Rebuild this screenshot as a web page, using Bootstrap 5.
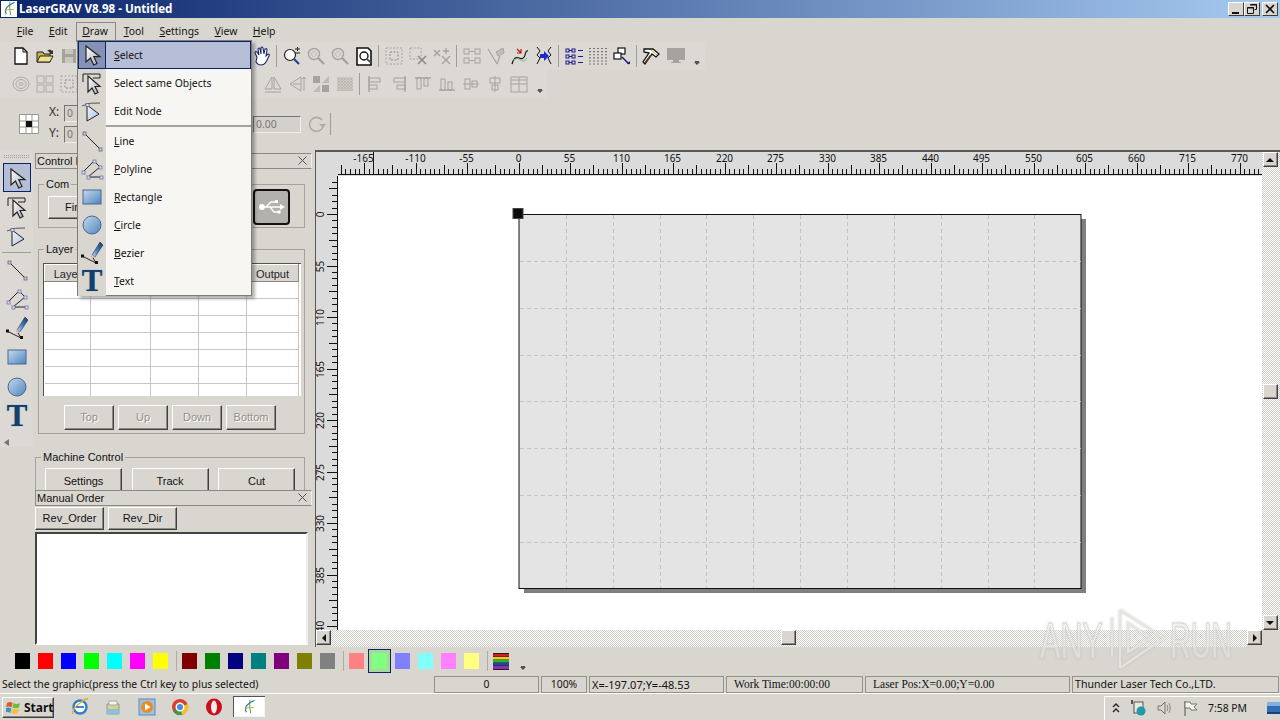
<!DOCTYPE html>
<html lang="en">

<head>
  <meta charset="UTF-8">
  <title>LaserGRAV V8.98 - Untitled</title>
  <link href="https://cdn.jsdelivr.net/npm/bootstrap@5.3.0/dist/css/bootstrap.min.css" rel="stylesheet">
  <style>
    html, body { margin: 0; height: 720px; overflow: hidden; }
    body {
      width: 1280px;
      background: #d9d6d0;
      color: #111;
      font: 10.4px/13px "Noto Sans", "Liberation Sans", sans-serif;
    }
    u { text-underline-offset: 1px; }

    /* title bar */
    .title-bar {
      height: 18px;
      background: linear-gradient(90deg, #0a246a 0, #a6caf0 100%);
      color: #fff;
      font: bold 11.6px/18px "Noto Sans", "Liberation Sans", sans-serif;
    }
    .app-icon { margin: 0 2px 0 1px; }
    .cap-group { margin-right: 2px; }
    .cap-btn {
      width: 16px; height: 14px; padding: 0;
      background: #d9d6d0;
      border: 1px solid; border-color: #fff #404040 #404040 #fff;
    }
    .cap-btn.cap-close { margin-left: 2px; }

    /* menu bar */
    .menu-bar { height: 24px; padding: 4px 0 0 9px; }
    .menu-top { padding: 3px 7.75px 0; height: 20px; }
    .menu-top.opened { box-shadow: inset 1px 1px #8d8a85, inset -1px 0 #8d8a85; margin-left: 1px; padding-left: 6px; padding-right: 8px; }

    /* toolbars */
    .tool-row { height: 28px; padding-left: 9px; }
    .tool-row.first { width: 705px; background: #dcd9d4; }
    .tool-row.second { width: 547px; background: #dcd9d4; }
    .under-menu-1 { width: 169px; flex: none; }
    .under-menu-2 { width: 180px; flex: none; }
    .tb-btn { width: 24px; height: 24px; flex: none; }
    .tb-btn svg { width: 20px; height: 20px; }
    .tb-sep { width: 6px; height: 22px; flex: none; }
    .tb-sep::after { content: ""; display: block; width: 1px; height: 22px; margin-left: 2px; background: #a09d97; }
    .tb-more { margin: 14px 0 0 6px; border: 3px solid transparent; border-top-color: #55534f; border-bottom: 0; width: 0; height: 0; box-shadow: 0 -2px 0 -1px #55534f; flex: none; }
    .colour-bar .tb-more { margin-left: 11px; }

    .prop-row { height: 52px; padding-left: 19px; }
    .prop-label { width: 17px; padding-left: 2px; font-size: 12px; color: #333; }
    .prop-input {
      background: #d4d1cb; color: #777;
      border: 1px solid; border-color: #77746f #eee #eee #77746f;
      height: 17px; line-height: 15px; padding-left: 2px; width: 40px;
    }
    .prop-input.angle { width: 48px; }
    .under-menu-3 { width: 149px; flex: none; }
    .rotate-icon { margin-left: 5px; }
    .prop-sep { width: 1px; height: 22px; background: #a09d97; margin-left: 4px; }

    /* left vertical toolbar */
    .left-tools { width: 33px; height: 297px; background: #dcd9d4; flex: none; }
    .grip { height: 3px; margin: 5px 4px 5px; border-top: 1px dotted #a09d97; border-bottom: 1px dotted #a09d97; }
    .lt-btn { width: 28px; height: 29.3px; margin-left: 3px; }
    .lt-btn svg { width: 24px; height: 24px; }
    .lt-btn.on { background: #b5bed6; box-shadow: inset 0 0 0 1px #0a246a; }
    .lt-sep { height: 3px; margin: 1px 2px 0; border-top: 1px solid #a09d97; }
    .big-t { font: bold 31px/28px "Liberation Serif", serif; color: #123f6b; text-shadow: 0 0 1px #5b7fa5; }

    /* dock panels */
    .dock { width: 277px; margin: 0 3px 0 2px; flex: none; font: 11px/13px "Liberation Sans", sans-serif; }
    .ctl-panel { height: 340px; padding-top: 3px; overflow: hidden; }
    .dock-title {
      height: 16px; padding: 0 1px; line-height: 14px;
      border: 1px solid #8d8a85; border-right-color: #eee;
    }
    .dock-x { width: 9px; height: 9px; margin: 2px 3px 0 0; flex: none; }
    fieldset.grp { border: 1px solid #a5a29c; display: block; }
    fieldset.grp legend {
      float: none; width: auto; font-size: 11px; line-height: 14px; margin: 0 0 0 5px; padding: 0 2px;
    }
    .grp-com { margin: 8px 0 0 3px; width: 267px; height: 51px; }
    .grp-layer { margin: 14px 0 0 3px; width: 267px; height: 192px; }
    .grp-machine { margin: 16px 0 0; width: 270px; height: 70px; }
    .com-row { margin-top: -2px; padding-left: 9px; }
    .btn.win-btn {
      --bs-btn-padding-y: 0;
      --bs-btn-padding-x: 0;
      --bs-btn-font-size: 11px;
      --bs-btn-line-height: 1;
      --bs-btn-border-radius: 0;
      --bs-btn-disabled-opacity: 1;
      background: #d9d6d0; color: #111;
      border: 1px solid; border-color: #fff #404040 #404040 #fff;
      box-shadow: inset -1px -1px #8d8a85;
      font-family: "Liberation Sans", sans-serif;
    }
    .btn.win-btn:disabled { color: #928f89; text-shadow: 1px 1px #fff; }
    .btn.win-btn.find-btn { width: 80px; height: 23px; text-align: left; padding-left: 16px; }
    .btn.win-btn.move-btn { width: 50px; height: 25px; }
    .btn.win-btn.mach-btn { width: 77px; height: 30px; padding-bottom: 4px; }
    .btn.win-btn.order-btn { width: 69px; height: 23px; }
    .move-row { margin: 9px 0 0 25px; }
    .mach-row { margin: 4px 9px 0; }
    .order-row { padding: 1px 0 2px; }
    .usb-box { width: 37px; height: 36px; background: #b3b1ad; border: 2px solid #111; border-radius: 4px; margin-right: 14px; }
    .grid-box {
      width: 258px; height: 133px; margin: 7px 0 0 4px; overflow: hidden; background: #fff;
      border-left: 1px solid #55534f; border-top: 1px solid #55534f;
    }
    .table.layer-grid {
      --bs-table-bg: transparent;
      table-layout: fixed; width: 254px; margin: 0; border-color: #c8c6c2;
    }
    .layer-grid td, .layer-grid th { padding: 0; height: 17px; border: 0; border-right: 1px solid #c8c6c2; border-bottom: 1px solid #c8c6c2; }
    .layer-grid th {
      background: #d9d6d0; font-weight: 400; font-size: 11px; text-align: center;
      border-color: #8d8a85; border-top: 1px solid #fff; border-left: 1px solid #fff;
    }
    .col-a { width: 46px; }
    .col-b { width: 60px; }
    .col-c { width: 48px; }
    .col-d { width: 52px; }
    .list-box { height: 113px; width: 273px; background: #fff; border: 2px solid; border-color: #444 #eee #fff #444; }

    /* canvas view */
    .view { flex: 1; border-top: 2px solid #5a5855; border-left: 1px solid #5a5855; height: 497px; display: grid; grid-template-columns: 22px 924px 18px; grid-template-rows: 24px 454px 17px; }
    .view svg { display: block; overflow: visible; }
    .ruler-bg { background: #dbdbdb; }
    .page-bg { background: #fff; }
    .checker { background: repeating-conic-gradient(#d0cec9 0 25%, #fff 0 50%) 0 0 / 2px 2px; }
    .sb-v { padding-right: 2px; }
    .sb-btn {
      width: 15px; height: 15px; background: #d9d6d0;
      border: 1px solid; border-color: #fff #404040 #404040 #fff; box-shadow: inset -1px -1px #8d8a85;
      flex: none;
    }
    .sb-arrow { width: 0; height: 0; border: 4px solid transparent; }
    .arrow-up { border-bottom-color: #111; border-top: 0; }
    .arrow-down { border-top-color: #111; border-bottom: 0; margin-top: 1px; }
    .arrow-left { border-right-color: #111; border-left: 0; }
    .arrow-right { border-left-color: #111; border-right: 0; }
    .thumb-gap-v { height: 208px; flex: none; }
    .thumb-gap-h { width: 450px; flex: none; }
    .sb-h { grid-column: 1 / span 2; }
    .ruler-text { font: 10px "Noto Sans", "Liberation Sans", sans-serif; fill: #111; }

    /* bottom bars */
    .colour-bar { height: 28px; padding-left: 15px; }
    .swatch { width: 15px; height: 16px; margin-right: 8px; flex: none; }
    .swatch.picked { box-shadow: 0 0 0 3px #a8d8a0, 0 0 0 4px #0a246a; }
    .col-sep { width: 6px; height: 20px; flex: none; }
    .col-sep::after { content: ""; display: block; width: 1px; height: 20px; background: #b0ada7; }

    .status-bar { height: 18px; }
    .stat-msg { width: 434px; padding-left: 2px; }
    .stat-cell { height: 17px; line-height: 15px; border: 1px solid #94918b; margin-right: 2px; flex: none; white-space: nowrap; overflow: hidden; }
    .serif-cell { font: 11.5px/15px "Liberation Serif", serif; padding-left: 7px; }
    .cell-count { width: 105px; text-align: center; }
    .cell-zoom { width: 46px; text-align: center; }
    .cell-pos { width: 135px; padding-left: 2px; font-size: 11px; }
    .cell-work { width: 137px; }
    .cell-laser { width: 205px; }
    .cell-firm { flex: 1 1 0; padding-left: 2px; margin-right: 1px; font-size: 10.6px; }

    .task-bar { height: 27px; border-top: 1px solid #fff; }
    .start-btn {
      width: 52px; height: 21px; margin: 3px 0 0 2px; padding-left: 3px; gap: 3px;
      background: #d9d6d0; border: 1px solid; border-color: #fff #404040 #404040 #fff;
      box-shadow: inset -1px -1px #8d8a85;
      font: bold 12px/19px "Noto Sans", "Liberation Sans", sans-serif;
    }
    .quick-group { margin-left: 9px; }
    .quick { width: 33.5px; }
    .quick svg { width: 18px; height: 18px; display: block; margin: 4px auto 0; }
    .task-item { width: 32px; height: 21px; margin: 2px 0 0 2px; background: #fff; box-shadow: inset 1px 1px #55534f, inset -1px -1px #f4f4f4; }
    .tray { width: 176px; height: 24px; margin-top: 2px; box-shadow: inset 1px 1px #fff; padding-left: 8px; }
    .tray-net { margin-left: 10px; }
    .tray-vol { margin-left: 8px; }
    .tray-flag { margin-left: 10px; }
    .tray-clock { width: 50px; margin-left: 10px; white-space: nowrap; }
    .tray-desk { margin-left: 8px; }

    .watermark { position: absolute; left: 1030px; top: 605px; width: 250px; height: 70px; pointer-events: none; filter: drop-shadow(0 0 1px rgba(160, 160, 160, .5)); }
    .watermark text {
      font: 50px "Liberation Sans", sans-serif;
      fill: rgba(255, 255, 255, .4);
      stroke: rgba(212, 212, 208, .9);
      stroke-width: 1;
    }
    .watermark path { fill: none; stroke: rgba(230, 230, 226, .9); stroke-width: 2.500; }

    /* open Draw menu */
    .dropdown-menu.draw-menu {
      position: absolute; left: 77px; top: 40px; width: 175px; height: 256px;
      padding: 0; margin: 0; border-radius: 0;
      border: 1px solid #7e7b76; background: #f8f6f3;
      box-shadow: 3px 3px 3px rgba(0, 0, 0, .3);
      font-size: 10.4px;
    }
    .draw-menu .dropdown-item {
      display: flex; align-items: center; height: 28px; padding: 0; color: #111;
      background: transparent;
    }
    .draw-menu .gutter { width: 28px; height: 100%; flex: none; background: #d9d6d0; display: flex; align-items: center; justify-content: center; }
    .draw-menu .gutter svg { width: 24px; height: 24px; }
    .draw-menu .item-text { padding-left: 8px; }
    .draw-menu .dropdown-item.active { background: #b5bed6; box-shadow: inset 0 0 0 1px #0a246a; }
    .draw-menu .active .gutter { background: #8592b5; box-shadow: inset 0 0 0 1px #0a246a; }
    .menu-line { height: 2px; background: linear-gradient(90deg, #d9d6d0 28px, #a5a29c 28px); }
    .menu-tail { height: 1px; background: linear-gradient(90deg, #d9d6d0 28px, transparent 28px); }
  </style>
</head>

<body class="position-relative">
  <!-- shared icons -->
  <svg width="0" height="0" class="position-absolute">
    <defs>
      <linearGradient id="blue-fill" x1="0" y1="0" x2="1" y2="1">
        <stop offset="0" stop-color="#c5d9ee" />
        <stop offset="1" stop-color="#4f86c0" />
      </linearGradient>
      <linearGradient id="arrow-fill" x1="0" y1="0" x2="1" y2="1">
        <stop offset="0" stop-color="#fff" />
        <stop offset="1" stop-color="#a9adb8" />
      </linearGradient>
      <linearGradient id="node-fill" x1="0" y1="0" x2="1" y2="1">
        <stop offset="0" stop-color="#f2f6fb" />
        <stop offset="1" stop-color="#a9c4e2" />
      </linearGradient>
      <linearGradient id="pen-fill" x1="0" y1="1" x2="1" y2="0">
        <stop offset="0" stop-color="#c7d9ee" />
        <stop offset=".5" stop-color="#3f77b8" />
        <stop offset="1" stop-color="#16365f" />
      </linearGradient>
    </defs>
    <symbol id="ic-arrow" viewBox="0 0 24 24"><path d="M6 3v16l4.500-4 3.200 7 3.300-1.500-3.200-6.800H20z" fill="url(#arrow-fill)" stroke="#222" stroke-width="1.200" /></symbol>
    <symbol id="ic-same" viewBox="0 0 24 24"><path d="M3 3h17v4h-7M3 3v8" fill="none" stroke="#222" /><path d="M8 5v16l4-4 3 6 3-1.500-3-6h5z" fill="url(#arrow-fill)" stroke="#222" stroke-width="1.200" /></symbol>
    <symbol id="ic-node" viewBox="0 0 24 24"><path d="M2 7q8-4 18-3" fill="none" stroke="#555" /><path d="M7 6v16l12-7z" fill="url(#node-fill)" stroke="#222" /><rect x="6" y="4.500" width="3" height="3" fill="#dde" stroke="#446" stroke-width=".6" /></symbol>
    <symbol id="ic-line" viewBox="0 0 24 24"><path d="M5 5l15 15" stroke="#222" /><rect x="3" y="3" width="3" height="3" fill="#ccd" stroke="#557" stroke-width=".7" /><rect x="19" y="19" width="3" height="3" fill="#ccd" stroke="#557" stroke-width=".7" /></symbol>
    <symbol id="ic-poly" viewBox="0 0 24 24"><path d="M3 15 14 4l6 6-12 10h13" fill="none" stroke="#222" /><path d="M3 15l5 5" stroke="#9aa" stroke-dasharray="1 1" /><g fill="#dde" stroke="#66a" stroke-width=".7"><rect x="2" y="14" width="3" height="3" /><rect x="13" y="3" width="3" height="3" /><rect x="19" y="9" width="3" height="3" /><rect x="7" y="19" width="3" height="3" /><rect x="20" y="19" width="3" height="3" /></g></symbol>
    <symbol id="ic-rect" viewBox="0 0 24 24"><rect x="3" y="5" width="18" height="14" fill="url(#blue-fill)" stroke="#44688f" /></symbol>
    <symbol id="ic-circle" viewBox="0 0 24 24"><circle cx="12" cy="12" r="9" fill="url(#blue-fill)" stroke="#44688f" /></symbol>
    <symbol id="ic-bezier" viewBox="0 0 24 24"><path d="M2 15l14 7M16 22 12 15" fill="none" stroke="#222" /><rect x="1" y="13.500" width="3" height="3" fill="#111" /><rect x="15" y="20" width="3" height="3" fill="#111" /><path d="M12 14 20 1l3 3-8 12z" fill="url(#pen-fill)" stroke="#123" stroke-width=".5" /><path d="M12 14l3 2-4 2z" fill="#e9b9a8" /></symbol>

    <symbol id="ic-new" viewBox="0 0 20 20"><path d="M4 2h8l4 4v12H4z" fill="#fff" stroke="#111" stroke-width="1.300" /><path d="M12 2v4h4" fill="none" stroke="#111" /></symbol>
    <symbol id="ic-open" viewBox="0 0 20 20"><path d="M2 6h6l1 2h6v8H2z" fill="#c9b04a" stroke="#222" /><path d="M2 16l3-6h13l-3 6z" fill="#efe090" stroke="#222" /><path d="M12 5q3-3 5 0l1-1v4h-4l1-1q-1-2-3-2z" fill="#333" /></symbol>
    <symbol id="ic-save" viewBox="0 0 20 20"><path d="M3 3h14v14H3z" fill="#a6a39d" /><rect x="6" y="3" width="8" height="5" fill="#c9c6c0" /><rect x="6" y="11" width="8" height="6" fill="#c9c6c0" /></symbol>
    <symbol id="ic-hand" viewBox="0 0 20 20"><path d="M5 11 3 7q0-2 2-1l2 3-1-6q1-2 2 0l1 5V2q1-2 2 0l1 6 1-5q2-1 2 1l-1 6 2-2q2 0 1 2l-3 6q-2 3-5 3-3 0-5-3z" fill="#fff" stroke="#1a2a6b" stroke-width="1.100" /></symbol>
    <symbol id="ic-zplus" viewBox="0 0 20 20"><circle cx="8" cy="9" r="5.500" fill="#fff" stroke="#222" stroke-width="1.200" /><path d="M12 13l5 5" stroke="#223a8a" stroke-width="2" /><path d="M13 3h5M15.500 1v4M13 7h5" stroke="#222" /></symbol>
    <symbol id="ic-zgray" viewBox="0 0 20 20"><circle cx="8" cy="8" r="5.500" fill="none" stroke="#a6a39d" stroke-width="1.400" /><circle cx="8" cy="8" r="2.500" fill="none" stroke="#c2bfb9" /><path d="M12 12l6 6" stroke="#a6a39d" stroke-width="2.400" /></symbol>
    <symbol id="ic-zpage" viewBox="0 0 20 20"><path d="M3 2h11l3 3v14H3z" fill="#fff" stroke="#111" stroke-width="1.600" /><circle cx="10" cy="10" r="4" fill="#fff" stroke="#111" stroke-width="1.400" /><path d="M13 13l3 3" stroke="#555" stroke-width="2" /></symbol>
    <symbol id="ic-g1" viewBox="0 0 20 20"><g fill="none" stroke="#a6a39d" stroke-dasharray="2 1.500"><rect x="2" y="2" width="16" height="16" /><rect x="6" y="6" width="8" height="8" stroke="#8d8a85" /></g></symbol>
    <symbol id="ic-g2" viewBox="0 0 20 20"><rect x="2" y="2" width="11" height="11" fill="none" stroke="#a6a39d" stroke-dasharray="2 1.500" /><path d="M10 10l8 8M18 10l-8 8" stroke="#8d8a85" stroke-width="1.600" /></symbol>
    <symbol id="ic-g3" viewBox="0 0 20 20"><path d="M2 4l6 6M8 4l-6 6M10 10l8 8M18 10l-8 8M14 2v6M11 5h6" stroke="#a6a39d" stroke-width="1.400" /></symbol>
    <symbol id="ic-g4" viewBox="0 0 20 20"><g fill="none" stroke="#a6a39d"><rect x="2" y="3" width="5" height="5" /><rect x="13" y="3" width="5" height="5" /><rect x="2" y="12" width="5" height="5" /><rect x="13" y="12" width="5" height="5" /><path d="M8 5.500h4M8 14.500h4" /></g></symbol>
    <symbol id="ic-g5" viewBox="0 0 20 20"><path d="M2 3l9 15M11 18l3-8" fill="none" stroke="#a6a39d" stroke-width="1.200" /><path d="M10 6l7-4 1 5-6 3z" fill="#c2bfb9" stroke="#a6a39d" /></symbol>
    <symbol id="ic-curve" viewBox="0 0 20 20"><path d="M2 18q2-8 7-6t6-3 3-4" fill="none" stroke="#111" stroke-width="1.200" /><path d="M3 14q5-3 8 0t6-2" fill="none" stroke="#7ec07e" /><path d="M7 3l4 4M11 3v4H7" stroke="#c01818" stroke-width="1.200" fill="none" /></symbol>
    <symbol id="ic-break" viewBox="0 0 20 20"><path d="M3 1l3 4-3 4 3 3-3 6M17 1l-3 4 3 4-3 3 3 6" fill="none" stroke="#111" /><path d="M6 8h4V5l5 5-5 5v-3H6z" fill="#1a2ad0" /></symbol>
    <symbol id="ic-list" viewBox="0 0 20 20"><g fill="none" stroke="#1a1a8a"><rect x="2" y="3" width="3" height="3" /><rect x="8" y="3" width="3" height="3" /><rect x="2" y="9" width="3" height="3" /><rect x="8" y="9" width="3" height="3" /><rect x="2" y="15" width="3" height="3" /><rect x="8" y="15" width="3" height="3" /><path d="M14 4.500h5M14 10.500h5M14 16.500h5M5 4.500h3M5 10.500h3M5 16.500h3" /></g></symbol>
    <symbol id="ic-dots" viewBox="0 0 20 20"><path d="M2 2v17M6 2v17M10 2v17M14 2v17M18 2v17" stroke="#222" stroke-width="1.100" stroke-dasharray="1.100 2" /></symbol>
    <symbol id="ic-move" viewBox="0 0 20 20"><rect x="6" y="2" width="7" height="6" fill="#fff" stroke="#111" stroke-width="1.200" /><rect x="2" y="7" width="7" height="6" fill="#fff" stroke="#111" stroke-width="1.200" /><path d="M10 11l7 7" stroke="#1a1a8a" stroke-width="1.500" /><path d="M15 18h3v-3z" fill="#1a1a8a" /></symbol>
    <symbol id="ic-hammer" viewBox="0 0 20 20"><path d="M2 3h9l6 5-3 3-4-3-7 10-2-2 6-9-5-1z" fill="#fff" stroke="#111" stroke-width="1.300" /><path d="M9 9l-6 8" stroke="#5b3a1c" stroke-width="1.800" /><path d="M9 4l6 5" stroke="#d0b040" /></symbol>
    <symbol id="ic-monitor" viewBox="0 0 20 20"><rect x="1" y="2" width="18" height="12" fill="#a6a39d" /><rect x="7" y="14" width="6" height="2" fill="#a6a39d" /><rect x="5" y="16" width="10" height="1" fill="#a6a39d" /></symbol>

    <symbol id="ic-rings" viewBox="0 0 20 20"><g fill="none" stroke="#aeaba5"><ellipse cx="10" cy="10" rx="8" ry="7" /><ellipse cx="10" cy="10" rx="5" ry="4.500" /><ellipse cx="10" cy="10" rx="2" ry="1.500" /></g></symbol>
    <symbol id="ic-fourbox" viewBox="0 0 20 20"><g fill="none" stroke="#aeaba5"><rect x="2" y="2" width="7" height="7" /><rect x="11" y="2" width="7" height="7" /><rect x="2" y="11" width="7" height="7" /><rect x="11" y="11" width="7" height="7" /></g></symbol>
    <symbol id="ic-flip" viewBox="0 0 20 20"><g fill="none" stroke="#a6a39d"><path d="M9 3v12H2zM11 3v12h7z" /><path d="M2 18h16" /></g></symbol>
    <symbol id="ic-flip2" viewBox="0 0 20 20"><g fill="none" stroke="#a6a39d"><path d="M14 3v14L3 10z" /><path d="M6 10h8M17 3v14" /><path d="M15 5l2-2 2 2" /></g></symbol>
    <symbol id="ic-shape" viewBox="0 0 20 20"><path d="M2 2h7v7H2zM11 11h7v7h-7z" fill="#a6a39d" /><path d="M18 2l-7 7h7zM2 18l7-7v7z" fill="#bdbab4" /></symbol>
    <symbol id="ic-check" viewBox="0 0 20 20"><rect x="2" y="3" width="16" height="14" fill="#bdbab4" /><path d="M2 5h16M2 8h16M2 11h16M2 14h16M4 3v14M7 3v14M10 3v14M13 3v14M16 3v14" stroke="#dbd8d2" stroke-dasharray="1 2" /></symbol>
    <symbol id="ic-a1" viewBox="0 0 20 20"><g fill="none" stroke="#a6a39d"><path d="M4 2v16" stroke-width="1.400" /><rect x="4" y="4" width="11" height="4" /><rect x="4" y="11" width="8" height="4" /></g></symbol>
    <symbol id="ic-a2" viewBox="0 0 20 20"><g fill="none" stroke="#a6a39d"><path d="M16 2v16" stroke-width="1.400" /><rect x="5" y="4" width="11" height="4" /><rect x="8" y="11" width="8" height="4" /></g></symbol>
    <symbol id="ic-a3" viewBox="0 0 20 20"><g fill="none" stroke="#a6a39d"><path d="M2 4h16" stroke-width="1.400" /><rect x="4" y="4" width="4" height="11" /><rect x="11" y="4" width="4" height="8" /></g></symbol>
    <symbol id="ic-a4" viewBox="0 0 20 20"><g fill="none" stroke="#a6a39d"><path d="M2 16h16" stroke-width="1.400" /><rect x="4" y="5" width="4" height="11" /><rect x="11" y="8" width="4" height="8" /></g></symbol>
    <symbol id="ic-a5" viewBox="0 0 20 20"><g fill="none" stroke="#a6a39d"><path d="M2 10h16" /><rect x="4" y="5" width="5" height="10" /><rect x="11" y="7" width="5" height="6" /></g></symbol>
    <symbol id="ic-a6" viewBox="0 0 20 20"><g fill="none" stroke="#a6a39d"><path d="M10 2v16" /><rect x="5" y="4" width="10" height="5" /><rect x="7" y="11" width="6" height="5" /></g></symbol>
    <symbol id="ic-a7" viewBox="0 0 20 20"><g fill="none" stroke="#a6a39d"><rect x="2" y="3" width="16" height="15" /><path d="M2 10h16M10 3v15M2 6h16" /></g></symbol>

    <symbol id="ic-app" viewBox="0 0 18 18"><rect width="18" height="18" fill="#fff" /><path d="M6 15Q3 9 9 5t6-3" fill="none" stroke="#2a6fc0" stroke-width="1.300" /><path d="M10 1q-1 8 1 15" fill="none" stroke="#3a9a3a" /><path d="M4 11q6-3 11-1" fill="none" stroke="#d0a020" /></symbol>
    <symbol id="ic-x" viewBox="0 0 9 9"><path d="M.5.500l8 8M8.500.500l-8 8" stroke="#55534f" /></symbol>
  </svg>

  <div class="title-bar d-flex align-items-center">
    <svg width="16" height="16" class="app-icon flex-shrink-0"><use href="#ic-app" /></svg>
    <span class="flex-grow-1">LaserGRAV V8.98 - Untitled</span>
    <div class="d-flex cap-group">
      <button class="cap-btn d-flex align-items-end justify-content-center"><svg width="8" height="8"><rect x="0" y="5" width="7" height="2" fill="#111" /></svg></button>
      <button class="cap-btn d-flex align-items-center justify-content-center"><svg width="10" height="10"><path d="M3.500.5h6v5h-2M.5 3.500h6v6h-6z" fill="none" stroke="#111" /><path d="M3 1h7M0 4h7" stroke="#111" /></svg></button>
      <button class="cap-btn cap-close d-flex align-items-center justify-content-center"><svg width="10" height="10"><path d="M1 1l8 8M9 1l-8 8" stroke="#111" stroke-width="1.600" /></svg></button>
    </div>
  </div>

  <div class="menu-bar d-flex">
    <div class="menu-top"><u>F</u>ile</div>
    <div class="menu-top"><u>E</u>dit</div>
    <div class="menu-top opened"><u>D</u>raw</div>
    <div class="menu-top"><u>T</u>ool</div>
    <div class="menu-top"><u>S</u>ettings</div>
    <div class="menu-top"><u>V</u>iew</div>
    <div class="menu-top"><u>H</u>elp</div>
  </div>

  <!-- main toolbar -->
  <div class="tool-row first d-flex align-items-center">
    <div class="tb-btn d-flex align-items-center justify-content-center"><svg><use href="#ic-new" /></svg></div>
    <div class="tb-btn d-flex align-items-center justify-content-center"><svg><use href="#ic-open" /></svg></div>
    <div class="tb-btn d-flex align-items-center justify-content-center"><svg><use href="#ic-save" /></svg></div>
    <div class="under-menu-1"></div>
    <div class="tb-btn d-flex align-items-center justify-content-center"><svg><use href="#ic-hand" /></svg></div>
    <div class="tb-sep"></div>
    <div class="tb-btn d-flex align-items-center justify-content-center"><svg><use href="#ic-zplus" /></svg></div>
    <div class="tb-btn d-flex align-items-center justify-content-center"><svg><use href="#ic-zgray" /></svg></div>
    <div class="tb-btn d-flex align-items-center justify-content-center"><svg><use href="#ic-zgray" /></svg></div>
    <div class="tb-btn d-flex align-items-center justify-content-center"><svg><use href="#ic-zpage" /></svg></div>
    <div class="tb-sep"></div>
    <div class="tb-btn d-flex align-items-center justify-content-center"><svg><use href="#ic-g1" /></svg></div>
    <div class="tb-btn d-flex align-items-center justify-content-center"><svg><use href="#ic-g2" /></svg></div>
    <div class="tb-btn d-flex align-items-center justify-content-center"><svg><use href="#ic-g3" /></svg></div>
    <div class="tb-sep"></div>
    <div class="tb-btn d-flex align-items-center justify-content-center"><svg><use href="#ic-g4" /></svg></div>
    <div class="tb-btn d-flex align-items-center justify-content-center"><svg><use href="#ic-g5" /></svg></div>
    <div class="tb-btn d-flex align-items-center justify-content-center"><svg><use href="#ic-curve" /></svg></div>
    <div class="tb-btn d-flex align-items-center justify-content-center"><svg><use href="#ic-break" /></svg></div>
    <div class="tb-sep"></div>
    <div class="tb-btn d-flex align-items-center justify-content-center"><svg><use href="#ic-list" /></svg></div>
    <div class="tb-btn d-flex align-items-center justify-content-center"><svg><use href="#ic-dots" /></svg></div>
    <div class="tb-btn d-flex align-items-center justify-content-center"><svg><use href="#ic-move" /></svg></div>
    <div class="tb-sep"></div>
    <div class="tb-btn d-flex align-items-center justify-content-center"><svg><use href="#ic-hammer" /></svg></div>
    <div class="tb-btn d-flex align-items-center justify-content-center"><svg><use href="#ic-monitor" /></svg></div>
    <div class="tb-more"></div>
  </div>

  <div class="tool-row second d-flex align-items-center">
    <div class="tb-btn d-flex align-items-center justify-content-center"><svg><use href="#ic-rings" /></svg></div>
    <div class="tb-btn d-flex align-items-center justify-content-center"><svg><use href="#ic-fourbox" /></svg></div>
    <div class="tb-btn d-flex align-items-center justify-content-center"><svg><use href="#ic-g1" /></svg></div>
    <div class="under-menu-2"></div>
    <div class="tb-btn d-flex align-items-center justify-content-center"><svg><use href="#ic-flip" /></svg></div>
    <div class="tb-btn d-flex align-items-center justify-content-center"><svg><use href="#ic-flip2" /></svg></div>
    <div class="tb-btn d-flex align-items-center justify-content-center"><svg><use href="#ic-shape" /></svg></div>
    <div class="tb-btn d-flex align-items-center justify-content-center"><svg><use href="#ic-check" /></svg></div>
    <div class="tb-sep"></div>
    <div class="tb-btn d-flex align-items-center justify-content-center"><svg><use href="#ic-a1" /></svg></div>
    <div class="tb-btn d-flex align-items-center justify-content-center"><svg><use href="#ic-a2" /></svg></div>
    <div class="tb-btn d-flex align-items-center justify-content-center"><svg><use href="#ic-a3" /></svg></div>
    <div class="tb-btn d-flex align-items-center justify-content-center"><svg><use href="#ic-a4" /></svg></div>
    <div class="tb-btn d-flex align-items-center justify-content-center"><svg><use href="#ic-a5" /></svg></div>
    <div class="tb-btn d-flex align-items-center justify-content-center"><svg><use href="#ic-a6" /></svg></div>
    <div class="tb-btn d-flex align-items-center justify-content-center"><svg><use href="#ic-a7" /></svg></div>
    <div class="tb-more"></div>
  </div>

  <div class="prop-row d-flex align-items-center">
    <svg width="20" height="20" class="flex-shrink-0 me-2"><path d="M.5.500h19v19H.5zM7 .5v19M13 .5v19M.5 7h19M.5 13h19" fill="#fff" stroke="#9a9791" /><rect x="7" y="7" width="6" height="6" fill="#111" /></svg>
    <div class="d-flex flex-column gap-1">
      <div class="d-flex"><span class="prop-label">X:</span><div class="prop-input">0</div></div>
      <div class="d-flex"><span class="prop-label">Y:</span><div class="prop-input">0</div></div>
    </div>
    <div class="under-menu-3"></div>
    <div class="prop-input angle">0.00</div>
    <svg width="20" height="20" class="flex-shrink-0 rotate-icon"><path d="M16 6a7 7 0 1 0 1 7" fill="none" stroke="#aeaba5" stroke-width="1.600" /><path d="M13 10h7l-3 4z" fill="#aeaba5" /></svg>
    <div class="prop-sep"></div>
  </div>

  <!-- work area -->
  <div class="d-flex">
    <div class="left-tools">
      <div class="grip"></div>
      <div class="lt-btn on d-flex align-items-center justify-content-center"><svg><use href="#ic-arrow" /></svg></div>
      <div class="lt-btn d-flex align-items-center justify-content-center"><svg><use href="#ic-same" /></svg></div>
      <div class="lt-btn d-flex align-items-center justify-content-center"><svg><use href="#ic-node" /></svg></div>
      <div class="lt-sep"></div>
      <div class="lt-btn d-flex align-items-center justify-content-center"><svg><use href="#ic-line" /></svg></div>
      <div class="lt-btn d-flex align-items-center justify-content-center"><svg><use href="#ic-poly" /></svg></div>
      <div class="lt-btn d-flex align-items-center justify-content-center"><svg><use href="#ic-bezier" /></svg></div>
      <div class="lt-btn d-flex align-items-center justify-content-center"><svg><use href="#ic-rect" /></svg></div>
      <div class="lt-btn d-flex align-items-center justify-content-center"><svg><use href="#ic-circle" /></svg></div>
      <div class="lt-btn d-flex align-items-center justify-content-center big-t">T</div>
      <svg width="6" height="8" class="ms-1 mt-2 d-block"><path d="M5 0v7L0 3.500z" fill="#77746f" /></svg>
    </div>

    <div class="dock">
      <div class="ctl-panel">
        <div class="dock-title d-flex justify-content-between"><span>Control Panel</span><svg class="dock-x"><use href="#ic-x" /></svg></div>
        <fieldset class="grp grp-com">
          <legend>Com</legend>
          <div class="com-row d-flex justify-content-between align-items-center">
            <button class="btn win-btn find-btn">Find</button>
            <div class="usb-box d-flex align-items-center justify-content-center">
              <svg width="28" height="16"><path d="M2 8h22M8 8l5-5h4M12 8l4 5h4" fill="none" stroke="#fff" stroke-width="1.400" /><circle cx="4" cy="8" r="3" fill="#fff" /><path d="M22 5l5 3-5 3z" fill="#fff" /><rect x="17" y="1" width="3" height="3" fill="#fff" /><circle cx="21" cy="13" r="1.800" fill="#fff" /></svg>
            </div>
          </div>
        </fieldset>
        <fieldset class="grp grp-layer">
          <legend>Layer</legend>
          <div class="grid-box">
            <table class="table layer-grid">
              <colgroup><col class="col-a"><col class="col-b"><col class="col-c"><col class="col-c"><col class="col-d"></colgroup>
              <thead>
                <tr><th>Layer</th><th></th><th></th><th></th><th>Output</th></tr>
              </thead>
              <tbody>
                <tr><td></td><td></td><td></td><td></td><td></td></tr>
                <tr><td></td><td></td><td></td><td></td><td></td></tr>
                <tr><td></td><td></td><td></td><td></td><td></td></tr>
                <tr><td></td><td></td><td></td><td></td><td></td></tr>
                <tr><td></td><td></td><td></td><td></td><td></td></tr>
                <tr><td></td><td></td><td></td><td></td><td></td></tr>
                <tr><td></td><td></td><td></td><td></td><td></td></tr>
              </tbody>
            </table>
          </div>
          <div class="move-row d-flex gap-1">
            <button class="btn win-btn move-btn" disabled>Top</button>
            <button class="btn win-btn move-btn" disabled>Up</button>
            <button class="btn win-btn move-btn" disabled>Down</button>
            <button class="btn win-btn move-btn" disabled>Bottom</button>
          </div>
        </fieldset>
        <fieldset class="grp grp-machine">
          <legend>Machine Control</legend>
          <div class="mach-row d-flex justify-content-between">
            <button class="btn win-btn mach-btn">Settings</button>
            <button class="btn win-btn mach-btn">Track</button>
            <button class="btn win-btn mach-btn">Cut</button>
          </div>
        </fieldset>
      </div>
      <div class="dock-title d-flex justify-content-between"><span>Manual Order</span><svg class="dock-x"><use href="#ic-x" /></svg></div>
      <div class="order-row d-flex gap-1">
        <button class="btn win-btn order-btn">Rev_Order</button>
        <button class="btn win-btn order-btn">Rev_Dir</button>
      </div>
      <div class="list-box"></div>
    </div>

    <div class="view">
      <div class="ruler-bg"></div>
      <div class="ruler-bg"><svg id="h-ruler" width="924" height="24" viewBox="338 152 924 24"></svg></div>
      <div class="checker sb-v d-flex justify-content-center align-items-start">
        <div class="sb-btn d-flex align-items-center justify-content-center"><div class="sb-arrow arrow-up"></div></div>
      </div>

      <div class="ruler-bg"><svg id="v-ruler" width="22" height="454" viewBox="316 176 22 454"></svg></div>
      <div class="page-bg"><svg id="page" width="924" height="454" viewBox="338 176 924 454"></svg></div>
      <div class="checker sb-v d-flex flex-column align-items-center">
        <div class="thumb-gap-v"></div>
        <div class="sb-btn"></div>
        <div class="flex-grow-1"></div>
        <div class="sb-btn d-flex align-items-center justify-content-center"><div class="sb-arrow arrow-down"></div></div>
      </div>

      <div class="sb-h d-flex">
        <div class="sb-btn d-flex align-items-center justify-content-center"><div class="sb-arrow arrow-left"></div></div>
        <div class="checker flex-grow-1 d-flex">
          <div class="thumb-gap-h"></div>
          <div class="sb-btn"></div>
        </div>
        <div class="sb-btn d-flex align-items-center justify-content-center"><div class="sb-arrow arrow-right"></div></div>
      </div>
      <div></div>
    </div>
  </div>

  <!-- colours -->
  <div class="colour-bar d-flex align-items-center" id="colour-bar"></div>

  <div class="status-bar d-flex align-items-center">
    <div class="stat-msg">Select the graphic(press the Ctrl key to plus selected)</div>
    <div class="stat-cell cell-count">0</div>
    <div class="stat-cell cell-zoom">100%</div>
    <div class="stat-cell cell-pos">X=-197.07;Y=-48.53</div>
    <div class="stat-cell serif-cell cell-work">Work Time:00:00:00</div>
    <div class="stat-cell serif-cell cell-laser">Laser Pos:X=0.00;Y=0.00</div>
    <div class="stat-cell cell-firm">Thunder Laser Tech Co.,LTD.</div>
  </div>

  <div class="task-bar d-flex">
    <div class="start-btn d-flex align-items-center flex-shrink-0">
      <svg width="15" height="15" class="flex-shrink-0"><path d="M1 3q3-2 5.500 0l-1 4.500Q3 6 0 7z" fill="#e2572c" /><path d="M7.500 3q3 2 6.500 0l-1 4.500q-3 1.500-6.500 0z" fill="#6dbb3a" /><path d="M0 8q3-1 5.300 .5l-1 4.500q-2-1.500-5.300-.5z" fill="#3a8fd8" /><path d="M6.300 8.500q3 1.500 6.500 0l-1 4.500q-3 1.500-6.500 0z" fill="#f4c22e" /></svg>
      <span>Start</span>
    </div>
    <div class="quick-group d-flex flex-shrink-0">
      <div class="quick"><svg viewBox="0 0 18 18"><circle cx="9" cy="9" r="6.500" fill="#fff" stroke="#2d7fd3" stroke-width="2.400" /><path d="M5 9h8M2 16Q0 12 9 5t7-3" fill="none" stroke="#e2b12c" stroke-width="1.400" /><path d="M5 9h8" stroke="#2d7fd3" stroke-width="1.800" /></svg></div>
      <div class="quick"><svg viewBox="0 0 18 18"><path d="M3 6h12v10H3z" fill="#d9d08a" stroke="#8a9aa0" /><path d="M5 3h8v4H5z" fill="#f4f4f0" stroke="#a0a8a8" /><path d="M3 11h12v5H3z" fill="#8cc0d8" /></svg></div>
      <div class="quick"><svg viewBox="0 0 18 18"><rect x="1" y="1" width="16" height="16" fill="#9cc0e0" stroke="#5d8ac0" /><circle cx="9" cy="9" r="6" fill="#ed8a1f" /><path d="M7 5.500v7l5.500-3.500z" fill="#fff" /></svg></div>
      <div class="quick"><svg viewBox="0 0 18 18"><circle cx="9" cy="9" r="8" fill="#d8402f" /><path d="M9 9 2 13a8 8 0 0 0 9 3.800z" fill="#3a9a46" /><path d="M9 9l2 7.800A8 8 0 0 0 17 6z" fill="#f0c52a" /><circle cx="9" cy="9" r="3.800" fill="#4c8be0" stroke="#fff" stroke-width="1.400" /></svg></div>
      <div class="quick"><svg viewBox="0 0 18 18"><ellipse cx="9" cy="9" rx="8" ry="8.500" fill="#c8101c" /><ellipse cx="9" cy="9" rx="3" ry="6.500" fill="#fbeaea" /></svg></div>
    </div>
    <div class="task-item d-flex align-items-center justify-content-center flex-shrink-0">
      <svg width="16" height="16"><use href="#ic-app" /></svg>
    </div>
    <div class="flex-grow-1"></div>
    <div class="tray d-flex align-items-center flex-shrink-0">
      <svg width="8" height="12" class="flex-shrink-0"><path d="M1 5l3-3 3 3M1 10l3-3 3 3" fill="none" stroke="#222" stroke-width="1.300" /></svg>
      <svg width="18" height="18" class="tray-net flex-shrink-0"><rect x="4" y="3" width="9" height="11" fill="#e8e8e0" stroke="#555" /><path d="M2 1v4" stroke="#555" stroke-width="2" /><circle cx="11" cy="12" r="4.500" fill="#1e9aa8" /></svg>
      <svg width="16" height="16" class="tray-vol flex-shrink-0"><path d="M2 6h3l4-4v12l-4-4H2z" fill="#d9d6d0" stroke="#77746f" /><path d="M11 5q2 3 0 6M13 3q3 5 0 10" fill="none" stroke="#8d8a85" /></svg>
      <svg width="16" height="16" class="tray-flag flex-shrink-0"><path d="M3 1v15" stroke="#55534f" /><path d="M3 2h5l1 2h6l-3 3 3 3H9L8 8H3z" fill="#f4f4f0" stroke="#77746f" /></svg>
      <span class="tray-clock flex-shrink-0">7:58 PM</span>
      <svg width="16" height="16" class="tray-desk flex-shrink-0"><rect x="1" y="2" width="14" height="12" fill="#2f6fb4" /><rect x="1" y="2" width="14" height="4" fill="#7fb0e0" /><rect x="1" y="12" width="14" height="2" fill="#1c3f78" /></svg>
    </div>
  </div>

  <!-- open Draw menu -->
  <div class="dropdown-menu show draw-menu">
    <a class="dropdown-item active"><span class="gutter"><svg><use href="#ic-arrow" /></svg></span><span class="item-text"><u>S</u>elect</span></a>
    <a class="dropdown-item"><span class="gutter"><svg><use href="#ic-same" /></svg></span><span class="item-text">Select same Objects</span></a>
    <a class="dropdown-item"><span class="gutter"><svg><use href="#ic-node" /></svg></span><span class="item-text">Edit Node</span></a>
    <div class="menu-line"></div>
    <a class="dropdown-item"><span class="gutter"><svg><use href="#ic-line" /></svg></span><span class="item-text"><u>L</u>ine</span></a>
    <a class="dropdown-item"><span class="gutter"><svg><use href="#ic-poly" /></svg></span><span class="item-text"><u>P</u>olyline</span></a>
    <a class="dropdown-item"><span class="gutter"><svg><use href="#ic-rect" /></svg></span><span class="item-text"><u>R</u>ectangle</span></a>
    <a class="dropdown-item"><span class="gutter"><svg><use href="#ic-circle" /></svg></span><span class="item-text"><u>C</u>ircle</span></a>
    <a class="dropdown-item"><span class="gutter"><svg><use href="#ic-bezier" /></svg></span><span class="item-text"><u>B</u>ezier</span></a>
    <a class="dropdown-item"><span class="gutter big-t">T</span><span class="item-text"><u>T</u>ext</span></a>
    <div class="menu-tail"></div>
  </div>

  <!-- watermark -->
  <svg class="watermark" viewBox="0 0 250 70">
    <text x="10" y="53" textLength="63" lengthAdjust="spacingAndGlyphs">ANY</text>
    <path d="M82 12v40M90 5l44 28-44 30M90 5v58M98 18l22 15-22 14z" />
    <text x="140" y="53" textLength="62" lengthAdjust="spacingAndGlyphs">RUN</text>
  </svg>

  <script>
    // rulers, page grid and colour bar
    const unit = 51.5 / 55;
    const zeroX = 518.5;
    const zeroY = 214;
    const tick = (x1, y1, x2, y2) => `<path d="M${x1} ${y1}L${x2} ${y2}" stroke="#111" />`;

    let hRuler = `<path d="M338 174.500H1262" stroke="#111" />`;
    for (let i = -38; i <= 158; i++) {
      const x = Math.round(zeroX + i * 5 * unit) + .5;
      const len = i % 11 === 0 ? 11 : (i % 11 === 5 || i % 11 === -5) ? 9 : 5;
      hRuler += tick(x, 174, x, 174 - len);
      if (i % 11 === 0) {
        hRuler += `<text class="ruler-text" x="${x - 1}" y="162" text-anchor="middle">${i * 5}</text>`;
      }
    }
    // mouse position mark
    hRuler += tick(373.5, 152, 373.5, 174);
    document.getElementById('h-ruler').innerHTML = hRuler;

    let vRuler = `<path d="M337.500 176V630" stroke="#111" />`;
    for (let i = -5; i <= 64; i++) {
      const y = Math.round(zeroY + i * 51.5 / 8) + .5;
      const len = i % 8 === 0 ? 11 : i % 4 === 0 ? 9 : 6;
      vRuler += tick(338, y, 338 - len, y);
      if (i % 8 === 0 && i >= 0) {
        const label = i === 64 ? '40' : String(i / 8 * 55);
        vRuler += `<text class="ruler-text" transform="translate(324 ${y}) rotate(-90)" text-anchor="middle">${label}</text>`;
      }
    }
    document.getElementById('v-ruler').innerHTML = vRuler;

    let page = `<rect x="524" y="219" width="562" height="374" fill="#7f7f7f" />
      <rect x="519" y="214.500" width="562" height="374" fill="#e4e4e4" stroke="#111" />`;
    for (let i = 1; i < 12; i++) {
      const x = Math.round(519 + i * 46.85) + .5;
      page += `<path d="M${x} 215V588" stroke="#c4c4c4" stroke-dasharray="4 3" />`;
    }
    for (let i = 1; i < 8; i++) {
      const y = Math.round(214 + i * 46.85) + .5;
      page += `<path d="M520 ${y}H1081" stroke="#c4c4c4" stroke-dasharray="4 3" />`;
    }
    page += `<rect x="513" y="208.500" width="10" height="10" fill="#0a0a0a" stroke="#444" />`;
    document.getElementById('page').innerHTML = page;

    const colourGroups = [
      ['#000000', '#ff0000', '#0000ff', '#00ff00', '#00ffff', '#ff00ff', '#ffff00'],
      ['#800000', '#008000', '#000080', '#008080', '#800080', '#808000', '#808080'],
      ['#ff8080', '#80ff80', '#8080ff', '#80ffff', '#ff80ff', '#ffff80']
    ];
    let colourHtml = '';
    colourGroups.forEach(group => {
      group.forEach(c => {
        const picked = c === '#80ff80' ? ' picked' : '';
        colourHtml += `<div class="swatch${picked}" style="background:${c}"></div>`;
      });
      colourHtml += '<div class="col-sep"></div>';
    });
    colourHtml += `<svg width="16" height="17" class="flex-shrink-0"><rect width="16" height="17" fill="#222" />
      <rect y="1" width="16" height="2.500" fill="#d02020" /><rect y="4" width="16" height="2.500" fill="#e8d020" />
      <rect y="7" width="16" height="2.500" fill="#30b030" /><rect y="10" width="16" height="2.500" fill="#2040c0" />
      <rect y="13" width="16" height="3" fill="#9030a0" /></svg><div class="tb-more"></div>`;
    document.getElementById('colour-bar').innerHTML = colourHtml;
  </script>

  <script src="https://cdn.jsdelivr.net/npm/bootstrap@5.3.0/dist/js/bootstrap.bundle.min.js"></script>
</body>

</html>
